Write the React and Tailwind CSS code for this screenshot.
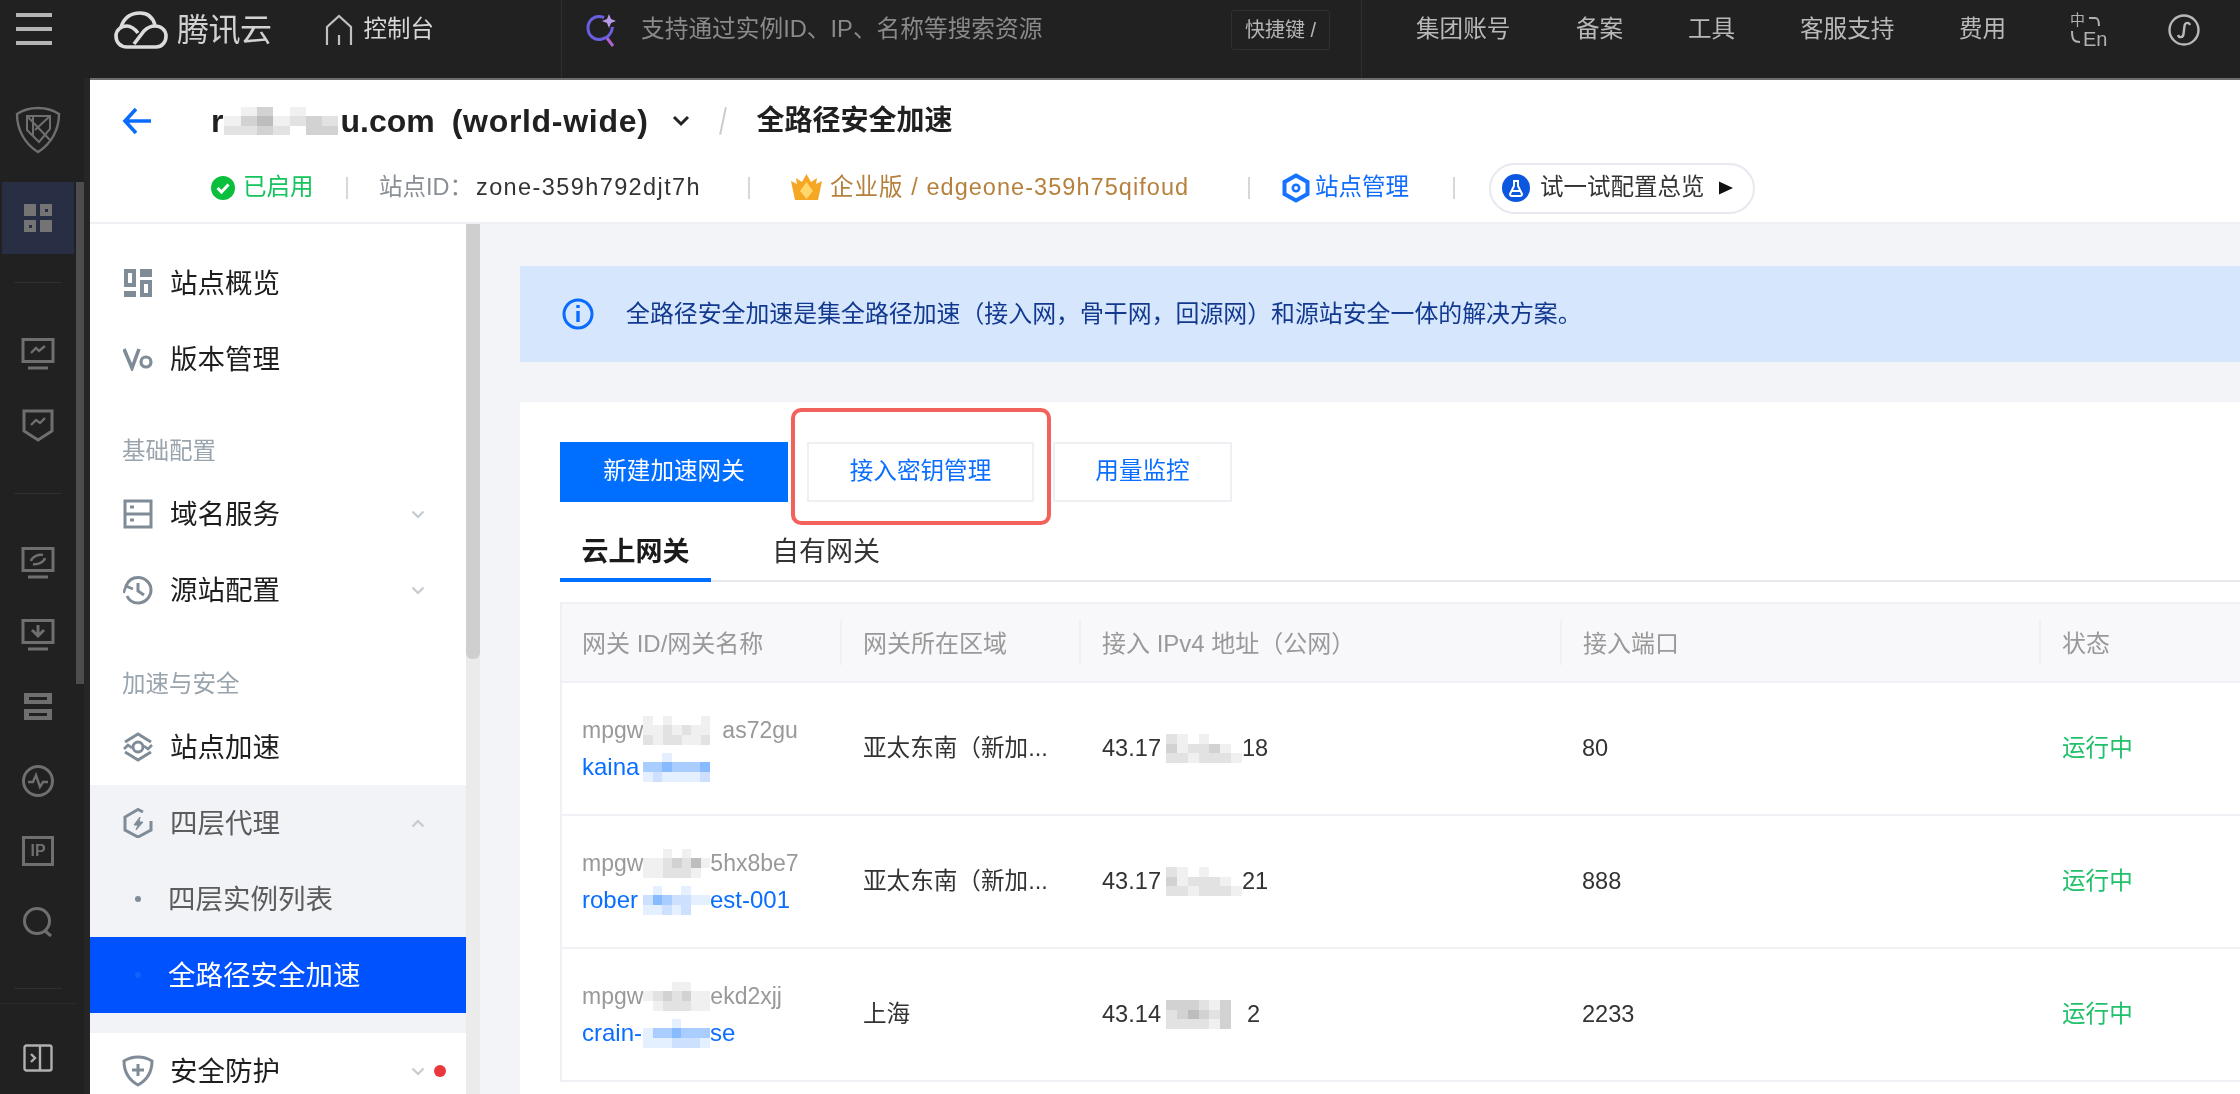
const FONT = "font-['Liberation_Sans','Noto_Sans_CJK_SC',sans-serif]";

const GRAY = ['bg-[#ffffff]', 'bg-[#f0f0f0]', 'bg-[#e2e2e2]', 'bg-[#d2d2d2]', 'bg-[#bdbdbd]'];
const BLUE = ['bg-[#ffffff]', 'bg-[#e4efff]', 'bg-[#cde1ff]', 'bg-[#aacdff]', 'bg-[#88baff]'];

function Mosaic({ rows, blue, className }) {
  const pal = blue ? BLUE : GRAY;
  return (
    <span className={`grid shrink-0 grid-cols-7 ${className || 'h-[29px] w-[67px]'}`}>
      {rows.join('').split('').map((c, i) => (
        <span key={i} className={pal[Number(c)]} />
      ))}
    </span>
  );
}

function Ic({ size = 30, vb = '0 0 30 30', color = '#7f8c97', sw = 3, children, className = '' }) {
  return (
    <svg width={size} height={size} viewBox={vb} fill="none" stroke={color} strokeWidth={sw} className={`shrink-0 ${className}`}>
      {children}
    </svg>
  );
}

/* ---------- top bar ---------- */
function TopBar() {
  return (
    <div className="flex h-[78px] shrink-0 items-center bg-[#212121] text-[#b9b9b9]">
      <div className="flex h-full w-[562px] shrink-0 items-center border-r border-[#2e2e2e] pb-[18px] pl-[16px]">
        <div className="mb-[3px] flex w-[36px] flex-col gap-[10px]">
          <span className="h-[4px] bg-[#b5b5b5]" />
          <span className="h-[4px] bg-[#b5b5b5]" />
          <span className="h-[4px] bg-[#b5b5b5]" />
        </div>
        <svg width="60" height="50" viewBox="110 5 60 50" fill="none" stroke="#dcdcdc" strokeWidth="3.6" className="ml-[58px] shrink-0">
          <path d="M121 27C124 18 130 13 140 13C148 13 153 18 155 25" />
          <path d="M127 47H156C162 47 166 42 166 36C166 30 161 26 155 26C150 26 147 28 144 31L134 44" />
          <path d="M127 47C120 47 116 42 116 36C116 30 121 26 127 26C131 26 134 28 138 33" />
        </svg>
        <span className="ml-[7px] text-[32px] leading-none tracking-[-0.5px] text-[#d2d2d2]">腾讯云</span>
        <svg width="30" height="34" viewBox="0 0 30 34" fill="none" stroke="#c0c0c0" strokeWidth="2.2" className="ml-[52px] shrink-0">
          <path d="M3 32V14L15 3L27 14V32" />
          <path d="M15 22V32" />
        </svg>
        <span className="ml-[10px] text-[23.5px] leading-none text-[#d8d8d8]">控制台</span>
      </div>
      <div className="flex h-full w-[800px] shrink-0 items-center border-r border-[#2e2e2e] pb-[18px]">
        <svg width="32" height="38" viewBox="0 0 32 38" fill="none" strokeWidth="3" className="ml-[23px] shrink-0">
          <path d="M19 6.5C10 3 3 9 3 17C3 25 10 30 17 28" stroke="#6a5fe0" />
          <path d="M17 28C23 27 27 22 27.5 16" stroke="#6a5fe0" />
          <path d="M22 27L28 35" stroke="#b060d0" />
          <path d="M24 3L26 8L31 10L26 12L24 17L22 12L17 10L22 8Z" fill="#b79be8" stroke="none" />
        </svg>
        <span className="ml-[24px] w-[404px] whitespace-nowrap text-[23.7px] leading-none text-[#8a8a8a]">支持通过实例ID、IP、名称等搜索资源</span>
        <span className="ml-[186px] flex h-[40px] w-[99px] items-center justify-center rounded-[3px] border border-[#303030] text-[20px] text-[#b5b5b5]">快捷键 /</span>
      </div>
      <div className="flex h-full items-center pb-[18px] pl-[54px] text-[23.6px] leading-none">
        <span className="w-[95px] whitespace-nowrap">集团账号</span>
        <span className="ml-[65px] w-[47px] whitespace-nowrap">备案</span>
        <span className="ml-[65px] w-[47px] whitespace-nowrap">工具</span>
        <span className="ml-[65px] w-[95px] whitespace-nowrap">客服支持</span>
        <span className="ml-[64px] w-[47px] whitespace-nowrap">费用</span>
        <span className="relative ml-[64px] block h-[36px] w-[36px] shrink-0 text-[#b0b0b0]">
          <span className="absolute left-0 top-[-1px] text-[15px] leading-[18px]">中</span>
          <span className="absolute left-[13px] top-[17px] text-[20px] leading-[20px]">En</span>
          <svg width="36" height="36" viewBox="0 0 36 36" fill="none" stroke="#b0b0b0" strokeWidth="2" className="absolute left-0 top-0">
            <path d="M19 6H25C28 6 29 8 29 14" />
            <path d="M2 19C2 28 4 30 10 30" />
          </svg>
        </span>
        <svg width="32" height="32" viewBox="0 0 32 32" fill="none" stroke="#b8b8b8" strokeWidth="2.4" className="ml-[62px] shrink-0">
          <circle cx="16" cy="16" r="14.5" />
          <path d="M10 21C11 24 15 24 15.5 20L16.5 12C17 8 21 8 22 11" />
        </svg>
      </div>
    </div>
  );
}

/* ---------- left rail ---------- */
function Monitor({ children }) {
  return (
    <svg width="34" height="34" viewBox="0 0 34 34" fill="none" stroke="#6f6f6f" strokeWidth="3">
      <path d="M2 2.5H32V24.5H2Z" />
      <path d="M7 31H27" />
      {children}
    </svg>
  );
}

function Rail() {
  return (
    <div className="flex w-[90px] shrink-0 bg-[#212121]">
      <div className="flex w-[76px] flex-col items-center pt-[28px]">
        <svg width="46" height="48" viewBox="0 0 46 48" fill="none" stroke="#6f6f6f" strokeWidth="2.4">
          <path d="M23 2C30 2 38 4 44 8C44 24 36 38 23 46C10 38 2 24 2 8C8 4 16 2 23 2Z" />
          <path d="M12 10H35V23L24 36L12 24Z" strokeWidth="2" />
          <path d="M12 10L35 34M35 10L20 24M18 10V30" strokeWidth="2" />
        </svg>
        <div className="mt-[28px] flex h-[72px] w-[72px] items-center justify-center bg-[#282e44]">
          <div className="grid grid-cols-2 gap-[4px]">
            <span className="h-[12px] w-[12px] bg-[#747474]" />
            <span className="flex h-[12px] w-[12px] items-center justify-center bg-[#747474]"><span className="h-[3px] w-[3px] bg-[#282e44]" /></span>
            <span className="flex h-[12px] w-[12px] items-center justify-center bg-[#747474]"><span className="h-[3px] w-[3px] bg-[#282e44]" /></span>
            <span className="h-[12px] w-[12px] bg-[#747474]" />
          </div>
        </div>
        <span className="mt-[28px] h-px w-[48px] bg-[#2f2f2f]" />
        <div className="mt-[54px] h-[34px]">
          <Monitor><path d="M10 16L15 11L18 14L24 9" strokeWidth="2.4" /></Monitor>
        </div>
        <div className="mt-[38px] h-[34px]">
          <svg width="32" height="34" viewBox="0 0 32 34" fill="none" stroke="#6f6f6f" strokeWidth="3">
            <path d="M2 2H30V22L16 31L2 22Z" />
            <path d="M9 16L14 11L18 14L23 9" strokeWidth="2.4" />
          </svg>
        </div>
        <span className="mt-[50px] h-px w-[48px] bg-[#2f2f2f]" />
        <div className="mt-[52px] h-[34px]">
          <Monitor>
            <path d="M10 15C11 11 17 8 22 9" strokeWidth="2.4" />
            <path d="M24 12C23 16 17 19 12 18" strokeWidth="2.4" />
          </Monitor>
        </div>
        <div className="mt-[38px] h-[34px]">
          <Monitor><path d="M17 7V17M11 12L17 18L23 12" strokeWidth="3" /></Monitor>
        </div>
        <div className="mt-[40px] h-[30px]">
          <svg width="30" height="30" viewBox="0 0 30 30" fill="#6f6f6f">
            <path fillRule="evenodd" d="M1 1H29V12H1ZM6 5V8H24V5ZM1 17H29V28H1ZM6 21V24H24V21Z" />
          </svg>
        </div>
        <div className="mt-[42px] h-[34px]">
          <svg width="34" height="34" viewBox="0 0 34 34" fill="none" stroke="#6f6f6f" strokeWidth="3">
            <circle cx="17" cy="17" r="14.5" />
            <path d="M7 18H12L15 11L19 23L22 18H27" strokeWidth="2.4" />
          </svg>
        </div>
        <div className="mt-[38px] flex h-[30px] w-[32px] items-center justify-center border-[3px] border-[#6f6f6f] text-[16px] font-bold leading-none text-[#6f6f6f]">IP</div>
        <div className="mt-[40px] h-[32px]">
          <svg width="32" height="32" viewBox="0 0 32 32" fill="none" stroke="#6f6f6f" strokeWidth="3">
            <circle cx="15" cy="15" r="12.5" />
            <path d="M22 24L29 30" />
          </svg>
        </div>
        <span className="mt-[50px] h-px w-[48px] bg-[#2f2f2f]" />
        <span className="mt-[14px] h-px w-full bg-[#2a2a2a]" />
        <div className="mt-[40px] h-[28px]">
          <svg width="30" height="28" viewBox="0 0 30 28" fill="none" stroke="#b0b0b0" strokeWidth="2.4">
            <rect x="1.5" y="1.5" width="27" height="25" rx="2" />
            <path d="M17 1.5V26.5" />
            <path d="M8 10L12 14L8 18" />
          </svg>
        </div>
      </div>
      <div className="w-[8px] pt-[104px]">
        <div className="h-[502px] bg-[#4d4d4d]" />
      </div>
      <div className="w-[6px] bg-[#262626]" />
    </div>
  );
}

/* ---------- sidebar ---------- */
function Chevron({ up }) {
  return (
    <svg width="14" height="9" viewBox="0 0 14 9" fill="none" stroke="#c5cbd2" strokeWidth="2.2">
      <path d={up ? 'M1.5 7.5L7 2L12.5 7.5' : 'M1.5 1.5L7 7L12.5 1.5'} />
    </svg>
  );
}

function NavRow({ icon, label, chevron, up, dot, muted }) {
  return (
    <div className="flex h-[76px] items-center pl-[33px]">
      <span className="flex w-[30px] shrink-0 justify-center">{icon}</span>
      <span className={`ml-[17px] whitespace-nowrap pt-[2px] text-[27.5px] leading-none ${muted ? 'text-[#5c5c5c]' : 'text-[#1e1e1e]'}`}>{label}</span>
      {chevron && <span className="ml-auto mr-[41px] flex"><Chevron up={up} /></span>}
      {dot && <span className="absolute right-[20px] h-[12px] w-[12px] rounded-full bg-[#e8383d]" />}
    </div>
  );
}

function Group({ label, h }) {
  return (
    <div className={`flex items-end pb-[13px] pl-[32px] text-[23.5px] leading-[24px] text-[#9aa4ad] ${h}`}>{label}</div>
  );
}

function Sidebar() {
  return (
    <div className="flex w-[390px] shrink-0">
      <div className="w-[376px] shrink-0 bg-white pt-[21px]">
        <NavRow
          label="站点概览"
          icon={
            <svg width="30" height="30" viewBox="0 0 30 30" fill="#7f8c97">
              <path fillRule="evenodd" d="M1 1H13V19H1ZM5 5V15H9V5Z" />
              <path d="M17 1H29V9H17ZM1 23H13V29H1Z" />
              <path fillRule="evenodd" d="M17 12H29V29H17ZM21 16V25H25V16Z" />
            </svg>
          }
        />
        <NavRow
          label="版本管理"
          icon={
            <svg width="30" height="24" viewBox="0 0 30 24" fill="none" stroke="#7f8c97" strokeWidth="3.6">
              <path d="M1 2L9 21L16 2" />
              <circle cx="23" cy="15" r="5" strokeWidth="3.2" />
            </svg>
          }
        />
        <Group label="基础配置" h="h-[79px]" />
        <NavRow
          label="域名服务"
          chevron
          icon={
            <Ic>
              <path d="M2 2H28V28H2ZM2 15H28" />
              <path d="M7 8H11M7 21H11" strokeWidth="3" />
            </Ic>
          }
        />
        <NavRow
          label="源站配置"
          chevron
          icon={
            <Ic>
              <path d="M3 11C5 6 9 2.5 15 2.5C22 2.5 28 8 28 15C28 22 22 28 15 28C10 28 6 25.5 4 21" />
              <path d="M0.5 18L3 11L10 14" strokeWidth="2.6" />
              <path d="M15 8V16L21 20" />
            </Ic>
          }
        />
        <Group label="加速与安全" h="h-[81px]" />
        <NavRow
          label="站点加速"
          icon={
            <Ic size={32} vb="0 0 32 32">
              <path d="M3 11L16 3L29 11M29 21L16 29L3 21" />
              <circle cx="16" cy="16" r="5" />
              <path d="M2 18L6 14L10 17M22 15L26 18L30 14" strokeWidth="2.6" />
            </Ic>
          }
        />
        <div className="bg-[#f2f3f7] pb-[20px]">
          <NavRow
            label="四层代理"
            muted
            chevron
            up
            icon={
              <Ic>
                <path d="M20 4L15 1.5L2 9V22L15 29L28 22V13" />
                <path d="M17 9L11 17H15L13 22L20 14H16Z" fill="#7f8c97" strokeWidth="1" />
              </Ic>
            }
          />
          <div className="flex h-[76px] items-center pl-[45px]">
            <span className="h-[6px] w-[6px] rounded-full bg-[#7f8c97]" />
            <span className="ml-[27px] whitespace-nowrap pt-[2px] text-[27.5px] leading-none text-[#5c5c5c]">四层实例列表</span>
          </div>
          <div className="flex h-[76px] items-center bg-[#0052ff] pl-[45px]">
            <span className="h-[6px] w-[6px] rounded-full bg-[#0a66ff]" />
            <span className="ml-[27px] whitespace-nowrap pt-[2px] text-[27.5px] leading-none text-white">全路径安全加速</span>
          </div>
        </div>
        <div className="relative flex items-center">
          <div className="flex-1">
            <NavRow
              label="安全防护"
              chevron
              dot
              icon={
                <Ic size={32} vb="0 0 32 32">
                  <path d="M16 2C21 2 26 3.5 30 6C30 17 25 25 16 30C7 25 2 17 2 6C6 3.5 11 2 16 2Z" />
                  <path d="M16 9V21M10 15H22" />
                </Ic>
              }
            />
          </div>
        </div>
      </div>
      <div className="w-[14px] bg-[#ebebeb]">
        <div className="h-[435px] rounded-b-[6px] bg-[#cfcfcf]" />
      </div>
    </div>
  );
}

/* ---------- header ---------- */
function Sep({ ml }) {
  return <span className={`h-[22px] w-[2px] shrink-0 bg-[#d5d8dc] ${ml}`} />;
}

function Header() {
  return (
    <div className="h-[144px] shrink-0 border-b-2 border-[#eff0f4] bg-white">
      <div className="flex h-[82px] items-center pl-[32px]">
        <svg width="30" height="28" viewBox="0 0 30 28" fill="none" stroke="#0a6cff" strokeWidth="3.6" className="shrink-0">
          <path d="M14 2L3 14L14 26M3 14H29" />
        </svg>
        <span className="ml-[59px] flex items-center text-[32px] font-bold leading-none text-[#202020]">
          <span>r</span>
          <Mosaic
            className="ml-[1px] h-[28px] w-[114px]"
            rows={['0130100', '1341232', '2232033']}
          />
          <span className="ml-[2px]">u.com</span>
          <span className="ml-[17px] tracking-[0.7px]">(world-wide)</span>
        </span>
        <svg width="18" height="12" viewBox="0 0 18 12" fill="none" stroke="#222" strokeWidth="3" className="ml-[23px] shrink-0">
          <path d="M2 2L9 9L16 2" />
        </svg>
        <span className="ml-[32px] h-[28px] w-[2px] rotate-[12deg] bg-[#c9cdd2]" />
        <span className="ml-[33px] whitespace-nowrap text-[28px] font-bold leading-none text-[#202020]">全路径安全加速</span>
      </div>
      <div className="flex h-[52px] items-center pl-[121px] text-[23.5px] leading-none">
        <svg width="24" height="24" viewBox="0 0 24 24" className="shrink-0">
          <circle cx="12" cy="12" r="12" fill="#0abf3b" />
          <path d="M6.5 12L10.5 16L17.5 8.5" fill="none" stroke="#fff" strokeWidth="3" />
        </svg>
        <span className="ml-[8px] w-[69px] whitespace-nowrap text-[#15c45c]">已启用</span>
        <Sep ml="ml-[34px]" />
        <span className="ml-[31px] w-[97px] whitespace-nowrap text-[#8a8f96]">站点ID：</span>
        <span className="w-[224px] whitespace-nowrap tracking-[1.4px] text-[#333]">zone-359h792djt7h</span>
        <Sep ml="ml-[48px]" />
        <svg width="33" height="30" viewBox="0 0 33 30" className="ml-[40px] shrink-0">
          <path d="M16.5 1L21 9L27 5L26 11L32 8L28 27H5L1 8L7 11L6 5L12 9Z" fill="#f5a623" />
          <path d="M16.5 9L23 18L16.5 26L10 18Z" fill="#ffd76a" />
        </svg>
        <span className="ml-[7px] w-[360px] whitespace-nowrap tracking-[1.05px] text-[#b5813c]">企业版 / edgeone-359h75qifoud</span>
        <Sep ml="ml-[58px]" />
        <svg width="28" height="30" viewBox="0 0 28 30" fill="none" stroke="#1573ff" strokeWidth="4" className="ml-[32px] shrink-0">
          <path d="M14 2.5L25.5 9V21L14 27.5L2.5 21V9Z" />
          <circle cx="14" cy="15" r="3.2" strokeWidth="2.6" />
        </svg>
        <span className="ml-[5px] w-[95px] whitespace-nowrap text-[#0f6cff]">站点管理</span>
        <Sep ml="ml-[43px]" />
        <div className="ml-[34px] flex h-[51px] w-[266px] shrink-0 items-center rounded-full border-2 border-[#e6e9ef] pl-[11px]">
          <svg width="28" height="28" viewBox="0 0 28 28" className="shrink-0">
            <circle cx="14" cy="14" r="14" fill="#0b57e0" />
            <path d="M11 7H17M12 7V12L8 20C8 21 9 22 10 22H18C19 22 20 21 20 20L16 12V7M10 17H18" fill="none" stroke="#fff" strokeWidth="2" />
          </svg>
          <span className="ml-[10px] whitespace-nowrap text-[23.5px] text-[#333]">试一试配置总览</span>
          <svg width="16" height="16" viewBox="0 0 16 16" className="ml-[13px] shrink-0">
            <path d="M1 1.5L15 8L1 14.5Z" fill="#111" />
          </svg>
        </div>
      </div>
    </div>
  );
}

/* ---------- table ---------- */
const COLS = 'grid grid-cols-[278px_239px_481px_479px_1fr]';

const ROWS = [
  {
    a: 'mpgw', b: 'as72gu', gap: 'ml-[12px]',
    g: ['1010001', '1121211', '2122112'],
    n1: 'kaina', n2: '', nb: ['0010000', '3343334', '1211112'],
    region: '亚太东南（新加...', ip1: '43.17', ip2: '18',
    ipm: ['2101000', '3122310', '2212221'], port: '80', ipGap: 'ml-[0px]',
  },
  {
    a: 'mpgw', b: '5hx8be7', gap: 'ml-[0px]',
    g: ['0010100', '1123241', '1122210'],
    n1: 'rober', n2: 'est-001', nb: ['0100100', '2432211', '1121200'],
    region: '亚太东南（新加...', ip1: '43.17', ip2: '21',
    ipm: ['2101000', '3122210', '2212221'], port: '888', ipGap: 'ml-[0px]',
  },
  {
    a: 'mpgw', b: 'ekd2xjj', gap: 'ml-[0px]',
    g: ['0001100', '1232311', '0122211'],
    n1: 'crain-', n2: 'se', nb: ['0001000', '1334333', '1112221'],
    region: '上海', ip1: '43.14', ip2: '2',
    ipm: ['3332130', '2343230', '2222130'], port: '2233', ipGap: 'ml-[5px]',
  },
];

function Th({ children, first }) {
  return (
    <div className="flex items-center">
      <div className={`flex h-[45px] w-full items-center ${first ? 'pl-[20px]' : 'border-l-2 border-[#f0f1f4] pl-[21px]'}`}>
        <span className="whitespace-nowrap pt-[2px] text-[24px] leading-none text-[#999]">{children}</span>
      </div>
    </div>
  );
}

function Table() {
  return (
    <div className="mt-[20px] border-l-2 border-[#eff0f4]">
      <div className={`${COLS} h-[81px] border-y-2 border-[#f0f1f5] bg-[#f8f8fb]`}>
        <Th first>网关 ID/网关名称</Th>
        <Th>网关所在区域</Th>
        <Th>接入 IPv4 地址（公网）</Th>
        <Th>接入端口</Th>
        <Th>状态</Th>
      </div>
      {ROWS.map((r, i) => (
        <div key={i} className={`${COLS} h-[133px] border-b-2 border-[#f0f1f5] text-[23.6px] leading-none`}>
          <div className="flex flex-col justify-center gap-[8px] pl-[20px] text-[23px]">
            <div className="flex h-[29px] items-center text-[#999]">
              <span>{r.a}</span>
              <Mosaic rows={r.g} />
              <span className={r.gap}>{r.b}</span>
            </div>
            <div className="flex h-[29px] items-center text-[24px] text-[#0a6eff]">
              <span className="w-[61px]">{r.n1}</span>
              <Mosaic rows={r.nb} blue />
              <span>{r.n2}</span>
            </div>
          </div>
          <div className="flex items-center pl-[23px] text-[#333]">{r.region}</div>
          <div className="flex items-center pl-[23px] text-[#333]">
            <span className="w-[64px]">{r.ip1}</span>
            <Mosaic rows={r.ipm} className="h-[29px] w-[76px]" />
            <span className={r.ipGap}>{r.ip2}</span>
          </div>
          <div className="flex items-center pl-[22px] text-[#333]">{r.port}</div>
          <div className="flex items-center pl-[23px] text-[#21c16b]">运行中</div>
        </div>
      ))}
    </div>
  );
}

/* ---------- content ---------- */
function Content() {
  return (
    <div className="min-w-0 flex-1 bg-[#f3f4f7] pl-[40px] pt-[42px]">
      <div className="flex h-[96px] items-center bg-[#d5e6fd] pl-[42px]">
        <svg width="32" height="34" viewBox="0 0 32 34" fill="none" stroke="#0a6cff" strokeWidth="3" className="shrink-0">
          <circle cx="16" cy="17" r="14" />
          <path d="M16 14V25" strokeWidth="3.4" />
          <path d="M16 8V11" strokeWidth="3.4" />
        </svg>
        <span className="ml-[32px] whitespace-nowrap text-[23.9px] leading-none text-[#12398f]">全路径安全加速是集全路径加速（接入网，骨干网，回源网）和源站安全一体的解决方案。</span>
      </div>
      <div className="mt-[40px] h-[700px] bg-white pl-[40px] pt-[40px]">
        <div className="flex items-center text-[23.6px] leading-none">
          <div className="flex h-[60px] w-[228px] items-center justify-center bg-[#006eff] text-white">新建加速网关</div>
          <div className="relative ml-[19px] flex h-[60px] w-[227px] items-center justify-center border-2 border-[#eef0f4] text-[#0a6eff]">
            接入密钥管理
            <span className="absolute left-[-18px] top-[-36px] h-[117px] w-[260px] rounded-[10px] border-[4px] border-[#f2625a]" />
          </div>
          <div className="ml-[19px] flex h-[60px] w-[179px] items-center justify-center border-2 border-[#eef0f4] text-[#0a6eff]">用量监控</div>
        </div>
        <div className="mt-[28px] flex h-[52px] border-b-2 border-[#e7eaef] text-[27px] leading-none">
          <div className="flex h-[52px] w-[151px] justify-center border-b-4 border-[#006eff] pt-[9px] font-bold text-[#1a1a1a]">云上网关</div>
          <div className="ml-[61px] pt-[9px] text-[#333]">自有网关</div>
        </div>
        <Table />
      </div>
    </div>
  );
}

export default function App() {
  return (
    <div className={`flex h-[1094px] w-[2240px] flex-col overflow-hidden bg-white blur-[0.6px] ${FONT}`}>
      <TopBar />
      <div className="flex min-h-0 flex-1">
        <Rail />
        <div className="flex min-w-0 flex-1 flex-col border-t-2 border-[#6e6e6e]">
          <Header />
          <div className="flex min-h-0 flex-1">
            <Sidebar />
            <Content />
          </div>
        </div>
      </div>
    </div>
  );
}
